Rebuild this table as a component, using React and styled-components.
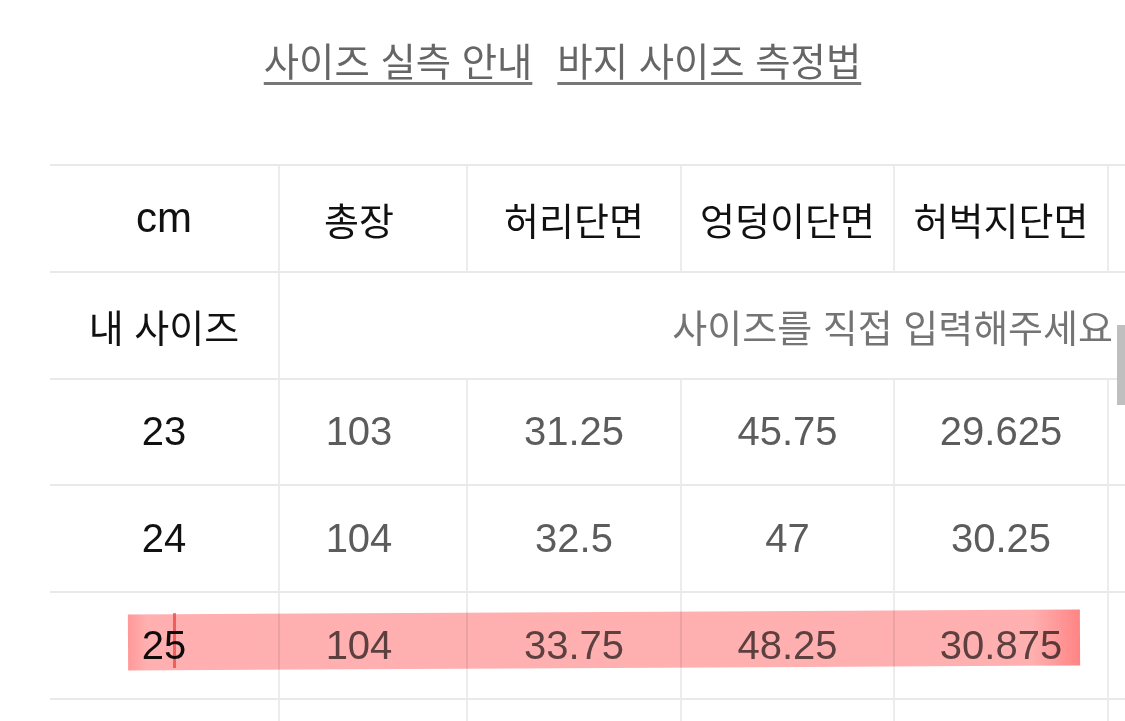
import React from 'react';
import styled, { createGlobalStyle } from 'styled-components';

const GlobalStyle = createGlobalStyle`
    html, body {
        margin: 0;
        padding: 0;
        background: #ffffff;
        overflow: hidden;
    }
    body {
        font-family: "Liberation Sans", "Noto Sans CJK KR", sans-serif;
    }
`;

const Page = styled.div`
    position: relative;
    width: 1125px;
    height: 721px;
    overflow: hidden;
    background: #fff;
`;

const LinkBar = styled.div`
    height: 165px;
    box-sizing: border-box;
    padding-top: 40px;
    display: flex;
    justify-content: center;
    gap: 25px;
`;

const GuideLink = styled.a`
    font-size: 38.4px;
    line-height: 46px;
    color: #666;
    text-decoration: underline;
    text-decoration-thickness: 3px;
    text-underline-offset: 6px;
    text-decoration-color: #777;
    cursor: pointer;
`;

const Table = styled.div`
    position: relative;
    margin-left: 50px;
    display: grid;
    grid-template-columns: 228px 188px 214px 213px 214px 214px;
    grid-auto-rows: 106.8px;
    border-top: 2.5px solid #e9e9e9;
    margin-top: -1px;
`;

const Cell = styled.div`
    box-sizing: border-box;
    display: flex;
    align-items: center;
    justify-content: ${p => (p.$right ? 'flex-end' : 'center')};
    padding-right: ${p => (p.$pad ? `${p.$pad}px` : '0')};
    border-bottom: 2.5px solid #e9e9e9;
    border-left: ${p => (p.$first ? 'none' : '2px solid #ececec')};
    grid-column: ${p => p.$span || 'auto'};
    font-size: ${p => (p.$num ? '40px' : '38px')};
    color: ${p => (p.$muted ? '#5c5c5c' : '#111')};
    white-space: nowrap;
    overflow: visible;
`;

const Unit = styled.span`
    font-size: 42px;
`;

const Placeholder = styled.span`
    font-size: 38px;
    color: #747474;
    margin-right: -6px;
`;

const Highlight = styled.div`
    position: absolute;
    left: 78px;
    top: 446px;
    width: 952px;
    height: 56px;
    transform: rotate(-0.3deg);
    background: linear-gradient(
        90deg,
        rgba(255, 90, 90, 0.62) 0%,
        rgba(255, 110, 110, 0.55) 2%,
        rgba(255, 110, 110, 0.55) 95%,
        rgba(255, 80, 80, 0.7) 100%
    );
    mix-blend-mode: multiply;
    pointer-events: none;
`;

const Tick = styled.div`
    position: absolute;
    left: 123px;
    top: 447px;
    width: 3px;
    height: 55px;
    background: rgba(225, 40, 40, 0.55);
    mix-blend-mode: multiply;
`;

const ScrollThumb = styled.div`
    position: absolute;
    right: 0;
    top: 325px;
    width: 8px;
    height: 80px;
    background: #bfbfbf;
`;

const headers = ['총장', '허리단면', '엉덩이단면', '허벅지단면', ''];

const rows = [
    ['23', '103', '31.25', '45.75', '29.625', ''],
    ['24', '104', '32.5', '47', '30.25', ''],
    ['25', '104', '33.75', '48.25', '30.875', ''],
    ['', '', '', '', '', ''],
];

function SizeTable() {
    return (
        <Table>
            <Cell $first><Unit>cm</Unit></Cell>
            {headers.map((h, i) => (
                <Cell key={'h' + i} $pad={i === 0 ? 28 : 0}>{h}</Cell>
            ))}
            <Cell $first>내 사이즈</Cell>
            <Cell $span="2 / span 4" $right>
                <Placeholder>사이즈를 직접 입력해주세요</Placeholder>
            </Cell>
            <Cell $first/>
            {rows.map((row, r) => row.map((v, i) => (
                <Cell key={r + '-' + i} $first={i === 0} $num $muted={i > 0}
                      $pad={i === 1 ? 28 : 0}>{v}</Cell>
            )))}
            <Highlight/>
            <Tick/>
        </Table>
    );
}

export default function App() {
    return (
        <Page>
            <GlobalStyle/>
            <LinkBar>
                <GuideLink>사이즈 실측 안내</GuideLink>
                <GuideLink>바지 사이즈 측정법</GuideLink>
            </LinkBar>
            <SizeTable/>
            <ScrollThumb/>
        </Page>
    );
}
